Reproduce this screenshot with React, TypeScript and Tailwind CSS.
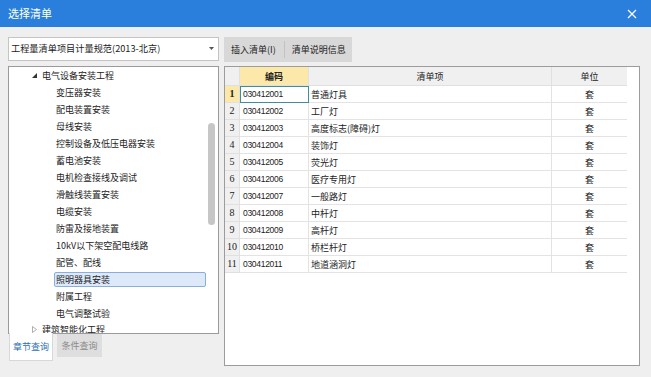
import React from "react";

const treeChildren = [
  "变压器安装",
  "配电装置安装",
  "母线安装",
  "控制设备及低压电器安装",
  "蓄电池安装",
  "电机检查接线及调试",
  "滑触线装置安装",
  "电缆安装",
  "防雷及接地装置",
  "10kV以下架空配电线路",
  "配管、配线",
  "照明器具安装",
  "附属工程",
  "电气调整试验",
];

const rows: [string, string][] = [
  ["030412001", "普通灯具"],
  ["030412002", "工厂灯"],
  ["030412003", "高度标志(障碍)灯"],
  ["030412004", "装饰灯"],
  ["030412005", "荧光灯"],
  ["030412006", "医疗专用灯"],
  ["030412007", "一般路灯"],
  ["030412008", "中杆灯"],
  ["030412009", "高杆灯"],
  ["030412010", "桥栏杆灯"],
  ["030412011", "地道涵洞灯"],
];

export default function App() {
  return (
    <div className="w-[651px] h-[377px] bg-[#efefef] flex flex-col overflow-hidden font-['Noto_Sans_CJK_SC',sans-serif] text-[#222]">
      {/* title bar */}
      <div className="h-[27px] bg-[#2b7fdc] flex items-center justify-between pl-[8px] pr-[14px] shrink-0">
        <span className="text-white text-[11px] leading-none">选择清单</span>
        <svg width="10" height="10" viewBox="0 0 10 10">
          <path d="M1 1 L9 9 M9 1 L1 9" stroke="white" strokeWidth="1.2" />
        </svg>
      </div>

      <div className="flex pt-[10px] pl-[8px]">
        {/* left column */}
        <div className="w-[211px] flex flex-col">
          <div className="h-[24px] bg-white border border-[#c4c4c4] flex items-center justify-between pl-[2px] pr-[4px]">
            <span className="text-[9.2px] leading-none">工程量清单项目计量规范(2013-北京)</span>
            <svg width="5" height="4" viewBox="0 0 5 4">
              <path d="M0 0 L5 0 L2.5 3 Z" fill="#555" />
            </svg>
          </div>
          <div className="mt-[5px] h-[268px] bg-white border border-[#9a9a9a] flex overflow-hidden">
            <div className="flex-1 flex flex-col">
              <div className="h-[17px] shrink-0 flex items-center pl-[23px] text-[9px] leading-none">
                <svg width="5" height="5" viewBox="0 0 5 5" className="mr-[5px]">
                  <path d="M5 0 L5 5 L0 5 Z" fill="#333" />
                </svg>
                电气设备安装工程
              </div>
              {treeChildren.map((t) => {
                const sel = t === "照明器具安装";
                return (
                  <div key={t} className="h-[17px] shrink-0 flex items-center pl-[45px] pr-[1px]">
                    <div
                      className={
                        sel
                          ? "h-[15px] w-[152px] flex items-center pl-[1px] bg-[#dde9f9] border border-[#87aedd] rounded-[2px] text-[9px] leading-none"
                          : "h-[15px] flex items-center pl-[2px] text-[9px] leading-none"
                      }
                    >
                      {t}
                    </div>
                  </div>
                );
              })}
              <div className="h-[14px] shrink-0 flex items-center pl-[23px] text-[9px] leading-none">
                <svg width="5" height="7" viewBox="0 0 5 7" className="mr-[5px]">
                  <path d="M0.5 0.5 L4.5 3.5 L0.5 6.5 Z" fill="none" stroke="#999" strokeWidth="0.8" />
                </svg>
                建筑智能化工程
              </div>
            </div>
            <div className="w-[11px] shrink-0">
              <div className="ml-[1px] mt-[56px] w-[7px] h-[102px] rounded-[4px] bg-[#c6c6c6]" />
            </div>
          </div>
          <div className="flex items-start">
            <div className="ml-[1px] mt-[-1px] w-[44px] h-[28px] bg-white border-x border-b border-[#d8d8d8] flex items-center justify-center text-[9px] leading-none text-[#2e6fb8]">
              章节查询
            </div>
            <div className="ml-[4px] w-[45px] h-[23px] bg-[#dedede] flex items-center justify-center text-[9px] leading-none text-[#8a8a8a]">
              条件查询
            </div>
          </div>
        </div>

        {/* right column */}
        <div className="ml-[5px] w-[416px] flex flex-col">
          <div className="h-[25px] w-[128px] bg-[#d8d8d8] flex items-center text-[9px] leading-none">
            <span className="pl-[7px] pr-[8px]">插入清单(I)</span>
            <span className="w-px h-[17px] bg-[#c2c2c2]" />
            <span className="pl-[7px]">清单说明信息</span>
          </div>
          <div className="mt-[4px] h-[300px] bg-white border border-[#9c9c9c] flex flex-col">
            {/* header */}
            <div className="h-[19px] flex shrink-0 text-[9px] leading-none">
              <div className="w-[15px] bg-[#f0f0f0] border-r border-b border-[#e0e0e0]" />
              <div className="w-[69px] bg-[#fce8a8] border-r border-b border-[#e0e0e0] flex items-center justify-center font-bold">
                编码
              </div>
              <div className="w-[243px] bg-[#f0f0f0] border-r border-b border-[#e0e0e0] flex items-center justify-center">
                清单项
              </div>
              <div className="w-[75px] bg-[#f0f0f0] border-b border-[#e0e0e0] flex items-center justify-center">
                单位
              </div>
            </div>
            {rows.map(([code, name], i) => (
              <div key={code} className="h-[17px] flex shrink-0 text-[9px] leading-none">
                <div
                  className={
                    i === 0
                      ? "w-[15px] bg-[#fce8a8] border-r border-b border-[#e0e0e0] flex items-center justify-center font-bold font-['Liberation_Serif',serif] text-[10px]"
                      : "w-[15px] bg-[#f0f0f0] border-r border-b border-[#e0e0e0] flex items-center justify-center font-['Liberation_Serif',serif] text-[10px]"
                  }
                >
                  {i + 1}
                </div>
                <div
                  className={
                    i === 0
                      ? "w-[69px] border border-[#3f8e9b] flex items-center pl-[2px] font-['Liberation_Sans',sans-serif] text-[8.5px] tracking-[-0.3px]"
                      : "w-[69px] border-r border-b border-[#e3e3e3] flex items-center pl-[3px] font-['Liberation_Sans',sans-serif] text-[8.5px] tracking-[-0.3px]"
                  }
                >
                  {code}
                </div>
                <div className="w-[243px] border-r border-b border-[#e3e3e3] flex items-center pl-[2px]">
                  {name}
                </div>
                <div className="w-[75px] border-b border-[#e3e3e3] flex items-center justify-center">
                  套
                </div>
              </div>
            ))}
          </div>
        </div>
      </div>
    </div>
  );
}
